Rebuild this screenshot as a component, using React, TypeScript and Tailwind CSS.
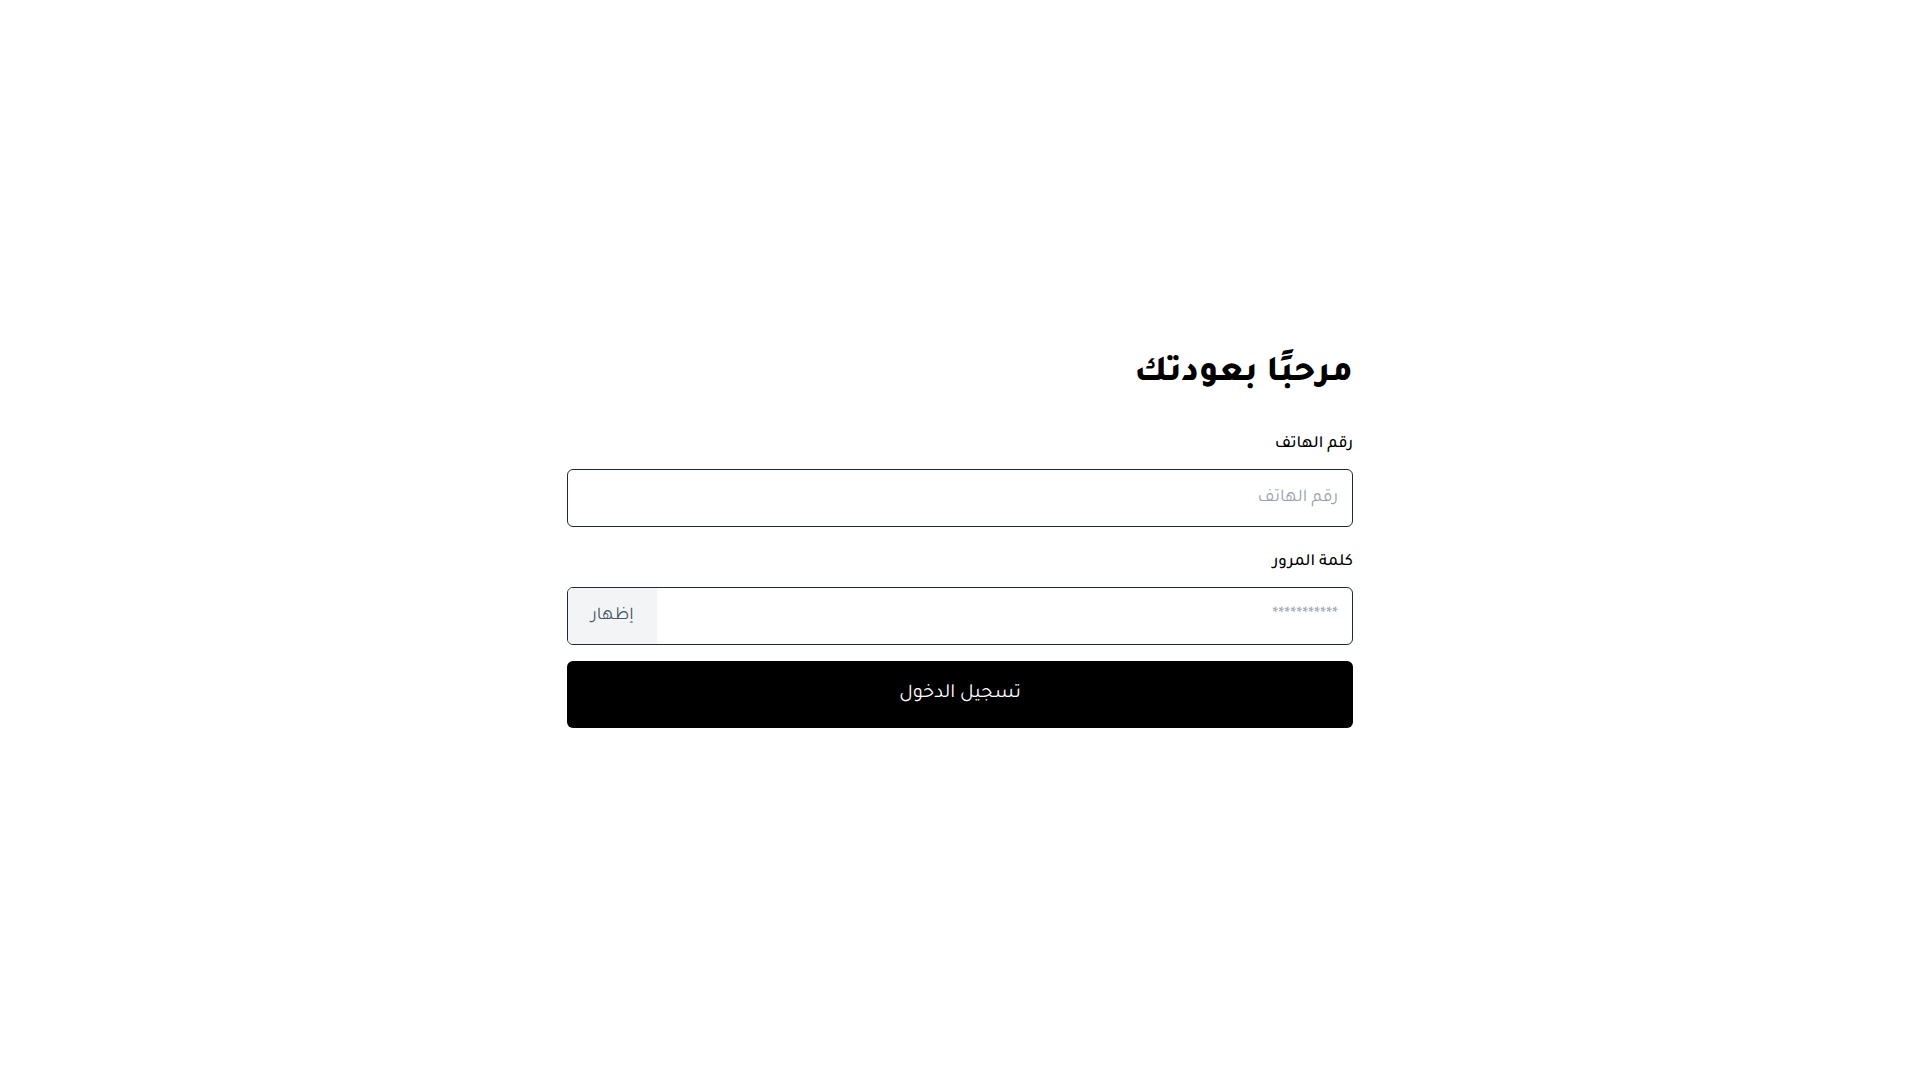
import React, { useState } from 'react';

const App = () => {
    // Form state
    const [phone, setPhone] = useState('');
    const [password, setPassword] = useState('');
    const [showPassword, setShowPassword] = useState(false);

    return (
        <div
            dir="rtl"
            className="min-h-screen bg-white flex items-center justify-center"
            style={{ fontFamily: 'Tajawal, "Noto Sans Arabic", sans-serif' }}
        >
            <form className="w-[786px] flex flex-col" onSubmit={(e) => e.preventDefault()}>
                {/* Title */}
                <h1 className="text-[36px] leading-[44px] font-extrabold text-black mb-9">مرحبًا بعودتك</h1>

                {/* Phone */}
                <label htmlFor="phone" className="text-[17px] leading-6 font-medium text-black mb-3">رقم الهاتف</label>
                <input
                    id="phone"
                    type="tel"
                    dir="rtl"
                    value={phone}
                    onChange={(e) => setPhone(e.target.value)}
                    placeholder="رقم الهاتف"
                    className="h-[58px] w-full rounded-md border border-gray-800 px-3.5 text-lg text-right text-gray-900 placeholder:text-gray-400 outline-none"
                />

                {/* Password */}
                <label htmlFor="password" className="text-[17px] leading-6 font-medium text-black mt-6 mb-3">كلمة المرور</label>
                <div className="h-[58px] w-full rounded-md border border-gray-800 flex overflow-hidden">
                    <input
                        id="password"
                        type={showPassword ? 'text' : 'password'}
                        value={password}
                        onChange={(e) => setPassword(e.target.value)}
                        placeholder="***********"
                        className="flex-1 px-3.5 text-lg text-gray-900 placeholder:text-gray-400 outline-none"
                    />
                    <button
                        type="button"
                        onClick={() => setShowPassword(!showPassword)}
                        className="w-[89px] bg-gray-100 text-gray-600 text-lg"
                    >
                        إظهار
                    </button>
                </div>

                {/* Submit */}
                <button type="submit" className="mt-4 h-[67px] w-full rounded-md bg-black text-white text-xl">
                    تسجيل الدخول
                </button>
            </form>
        </div>
    );
};

export default App;
